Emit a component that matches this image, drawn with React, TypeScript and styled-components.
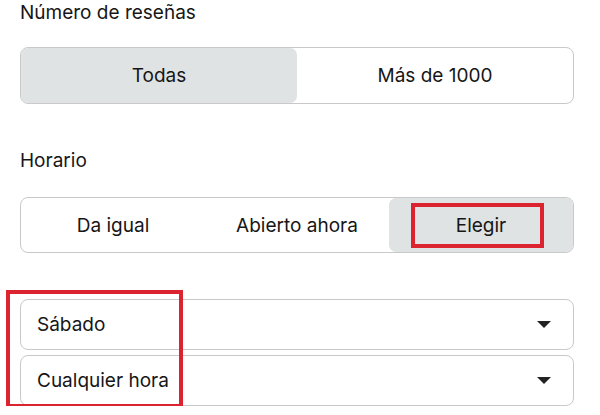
import React from "react";
import styled, { createGlobalStyle } from "styled-components";

const GlobalStyle = createGlobalStyle`
  html, body {
    margin: 0;
    padding: 0;
    background: #ffffff;
  }
  body {
    font-family: Inter, "Noto Sans", "Liberation Sans", sans-serif;
    color: #161616;
  }
`;

const Page = styled.div`
  width: 554px;
  padding: 2px 26px 0 20px;
`;

const Label = styled.div<{ $top: number }>`
  margin-top: ${(p) => p.$top}px;
  font-size: 19px;
  line-height: 22px;
  height: 22px;
`;

const Segmented = styled.div<{ $top: number; $height: number }>`
  margin-top: ${(p) => p.$top}px;
  height: ${(p) => p.$height}px;
  box-sizing: border-box;
  border: 1px solid #c9c9c9;
  border-radius: 8px;
  display: flex;
`;

const Segment = styled.div<{ $active?: boolean }>`
  position: relative;
  flex: 1;
  display: flex;
  align-items: center;
  justify-content: center;
  font-size: 19px;
  border-radius: 7px;
  background: ${(p) => (p.$active ? "#e0e3e3" : "transparent")};
`;

const Highlight = styled.div`
  position: absolute;
  left: 22px;
  right: 29px;
  top: 5px;
  bottom: 4px;
  border: 4px solid #db2430;
`;

const Selects = styled.div`
  position: relative;
  margin-top: 46px;
  display: flex;
  flex-direction: column;
  gap: 5px;
`;

const Select = styled.div`
  height: 51px;
  box-sizing: border-box;
  border: 1px solid #c9c9c9;
  border-radius: 8px;
  display: flex;
  align-items: center;
  justify-content: space-between;
  padding: 0 22px 0 16px;
  font-size: 19px;
`;

const Caret = styled.span`
  width: 0;
  height: 0;
  border-left: 7px solid transparent;
  border-right: 7px solid transparent;
  border-top: 7px solid #222;
`;

const SelectHighlight = styled.div`
  position: absolute;
  left: -14px;
  top: -9px;
  width: 177px;
  height: 118px;
  box-sizing: border-box;
  border: 4px solid #db2430;
`;

export default function App() {
  return (
    <Page>
      <GlobalStyle />
      <Label $top={0}>Número de reseñas</Label>
      <Segmented $top={23} $height={57}>
        <Segment $active>Todas</Segment>
        <Segment>Más de 1000</Segment>
      </Segmented>

      <Label $top={46}>Horario</Label>
      <Segmented $top={25} $height={56}>
        <Segment>Da igual</Segment>
        <Segment>Abierto ahora</Segment>
        <Segment $active>
          Elegir
          <Highlight />
        </Segment>
      </Segmented>

      <Selects>
        <Select>
          <span>Sábado</span>
          <Caret />
        </Select>
        <Select>
          <span>Cualquier hora</span>
          <Caret />
        </Select>
        <SelectHighlight />
      </Selects>
    </Page>
  );
}
